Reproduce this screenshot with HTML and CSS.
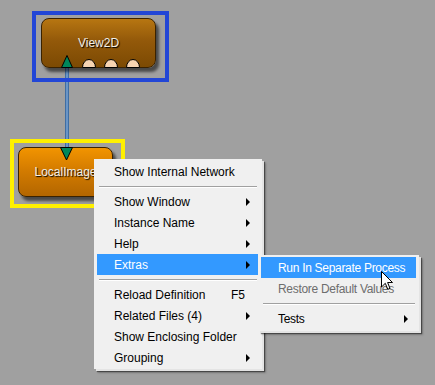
FILE: index.html
```html
<!DOCTYPE html>
<html lang="en">
<head>
    <meta charset="UTF-8">
    <title>Network</title>
    <link rel="stylesheet" href="styles.css">
</head>
<body>
    <div class="canvas">
        <div class="link"></div>

        <div class="frame frame-blue view2d-frame">
            <div class="node node-dark view2d">
                <span class="node-label">View2D</span>
                <svg class="ports" width="115" height="50" viewBox="0 0 115 50">
                    <polygon points="20.5,49.5 26,37.5 31.5,49.5" fill="#00875a" stroke="#000" stroke-width="1"/>
                    <path d="M41.5,49.5 A6.5,8 0 0 1 54.5,49.5 Z" fill="#f6d4b2" stroke="#000" stroke-width="1"/>
                    <path d="M63.5,49.5 A6.5,8 0 0 1 76.5,49.5 Z" fill="#f6d4b2" stroke="#000" stroke-width="1"/>
                    <path d="M85.5,49.5 A6.5,8 0 0 1 98.5,49.5 Z" fill="#f6d4b2" stroke="#000" stroke-width="1"/>
                </svg>
            </div>
        </div>

        <div class="frame frame-yellow local-frame">
            <div class="node node-bright local">
                <span class="node-label">LocalImage</span>
                <svg class="ports" width="95" height="50" viewBox="0 0 95 50">
                    <polygon points="42.5,0.5 48.5,13 54.5,0.5" fill="#00875a" stroke="#000" stroke-width="1"/>
                </svg>
            </div>
        </div>

        <div class="menu main-menu">
            <div class="item">Show Internal Network</div>
            <div class="sep"></div>
            <div class="item sub">Show Window</div>
            <div class="item sub">Instance Name</div>
            <div class="item sub">Help</div>
            <div class="item sub active">Extras</div>
            <div class="sep"></div>
            <div class="item">Reload Definition <span class="key">F5</span></div>
            <div class="item sub">Related Files (4)</div>
            <div class="item">Show Enclosing Folder</div>
            <div class="item sub">Grouping</div>
        </div>

        <div class="menu extras-menu">
            <div class="item active">Run In Separate Process</div>
            <div class="item disabled">Restore Default Values</div>
            <div class="sep"></div>
            <div class="item sub">Tests</div>
        </div>

        <svg class="cursor" width="13" height="20" viewBox="0 0 13 20">
            <path d="M0.5,0.5 L0.5,16 L4.3,12.3 L6.8,18.3 L9,17.4 L6.6,11.5 L11.5,11.5 Z" fill="#fff" stroke="#000" stroke-width="1" stroke-linejoin="miter"/>
        </svg>
    </div>
</body>
</html>
```

FILE: styles.css
```css
* {
    box-sizing: border-box;
    margin: 0;
    padding: 0;
}

body {
    margin: 0;
    background: #a0a0a0;
    font-family: "Liberation Sans", Arial, sans-serif;
    overflow: hidden;
}

.canvas {
    position: relative;
    width: 435px;
    height: 385px;
    background: #a0a0a0;
}

/* nodes of the network */

.frame {
    position: absolute;
    border: 4px solid;
    padding: 3px 0 0 5px;
}

.frame-blue {
    border-color: #2246d6;
}

.frame-yellow {
    border-color: #fff000;
}

.view2d-frame {
    left: 32px;
    top: 11px;
    width: 137px;
    height: 71px;
}

.local-frame {
    left: 10px;
    top: 139px;
    width: 115px;
    height: 69px;
    padding: 4px 0 0 4px;
}

.node {
    position: relative;
    height: 50px;
    border: 1px solid #3a2200;
    border-radius: 8px;
    display: flex;
    align-items: center;
    justify-content: center;
    box-shadow: 3px 4px 3px rgba(0, 0, 0, 0.55);
}

.node-dark {
    background: linear-gradient(to bottom, #b77611, #93590a 45%, #7c4a03);
}

.node-bright {
    background: linear-gradient(to bottom, #f29400, #d47c00 45%, #b36600);
}

.view2d {
    width: 115px;
}

.local {
    width: 95px;
}

.node-label {
    font-size: 12px;
    color: #f3efe6;
    text-shadow: 1px 1px 1px #000;
    margin-top: -1px;
}

.ports {
    position: absolute;
    left: -1px;
    top: -1px;
}

.link {
    position: absolute;
    left: 65px;
    top: 62px;
    width: 4px;
    height: 88px;
    background: linear-gradient(to right, #2a5a92, #7fa8d6, #2a5a92);
}

/* context menus */

.menu {
    position: absolute;
    background: #f0f0f0;
    padding: 2px 4px 1px 3px;
    font-size: 12px;
    color: #000;
    box-shadow: 2px 2px 0 #e4e4e4, 3px 3px 1px rgba(0, 0, 0, 0.45), 4px 4px 2px rgba(0, 0, 0, 0.2);
}

.main-menu {
    left: 94px;
    top: 159px;
    width: 168px;
}

.extras-menu {
    left: 258px;
    top: 255px;
    width: 161px;
    padding: 2px 3px 2px 3px;
    letter-spacing: -0.3px;
}

.item {
    position: relative;
    height: 21px;
    line-height: 21px;
    padding: 1px 0 0 17px;
    white-space: nowrap;
}

.item.active {
    background: #3399ff;
    color: #fff;
}

.item.disabled {
    color: #6d6d6d;
}

.item.sub::after {
    content: "";
    position: absolute;
    right: 8px;
    top: 7px;
    border-left: 4px solid #000;
    border-top: 4px solid transparent;
    border-bottom: 4px solid transparent;
}

.key {
    position: absolute;
    right: 13px;
}

.sep {
    height: 9px;
    margin: 0 1px 0 2px;
    display: flex;
    align-items: center;
}

.sep::before {
    content: "";
    flex: 1;
    border-top: 1px solid #a0a0a0;
    border-bottom: 1px solid #ffffff;
}

.cursor {
    position: absolute;
    left: 381px;
    top: 271px;
}
```
